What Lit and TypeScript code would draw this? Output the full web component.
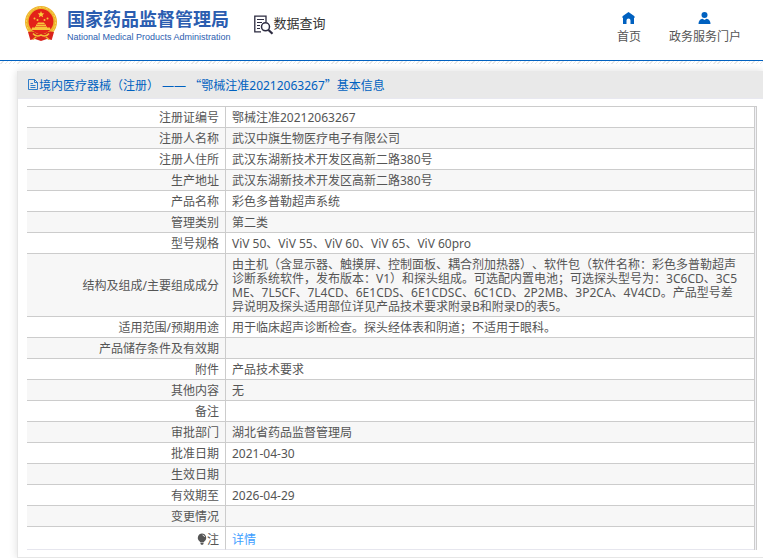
import { LitElement, html, css, svg, nothing } from "lit";
import { customElement, property } from "lit/decorators.js";

interface Row {
  label: string;
  value?: string;
  note?: boolean;
}

const rows: Row[] = [
  { label: "注册证编号", value: "鄂械注准20212063267" },
  { label: "注册人名称", value: "武汉中旗生物医疗电子有限公司" },
  { label: "注册人住所", value: "武汉东湖新技术开发区高新二路380号" },
  { label: "生产地址", value: "武汉东湖新技术开发区高新二路380号" },
  { label: "产品名称", value: "彩色多普勒超声系统" },
  { label: "管理类别", value: "第二类" },
  { label: "型号规格", value: "ViV 50、ViV 55、ViV 60、ViV 65、ViV 60pro" },
  {
    label: "结构及组成/主要组成成分",
    value:
      "由主机（含显示器、触摸屏、控制面板、耦合剂加热器）、软件包（软件名称：彩色多普勒超声诊断系统软件，发布版本：V1）和探头组成。可选配内置电池；可选探头型号为：3C6CD、3C5ME、7L5CF、7L4CD、6E1CDS、6E1CDSC、6C1CD、2P2MB、3P2CA、4V4CD。产品型号差异说明及探头适用部位详见产品技术要求附录B和附录D的表5。",
  },
  { label: "适用范围/预期用途", value: "用于临床超声诊断检查。探头经体表和阴道；不适用于眼科。" },
  { label: "产品储存条件及有效期" },
  { label: "附件", value: "产品技术要求" },
  { label: "其他内容", value: "无" },
  { label: "备注" },
  { label: "审批部门", value: "湖北省药品监督管理局" },
  { label: "批准日期", value: "2021-04-30" },
  { label: "生效日期" },
  { label: "有效期至", value: "2026-04-29" },
  { label: "变更情况" },
  { label: "注", note: true },
];

const emblem = svg`
  <path d="M7 24 L5 34 L10 33 L16 35 L22 33 L27 34 L25 24 Z" fill="#d9231c"/>
  <circle cx="16" cy="16" r="16" fill="#eeb52d"/>
  <circle cx="16" cy="16" r="14.6" fill="none" stroke="#f9d65c" stroke-width="1" stroke-dasharray="2 1.5"/>
  <circle cx="16" cy="15.5" r="12.4" fill="#e32219"/>
  <path d="M16 5l.9 2.2 2.4.2-1.8 1.5.6 2.3-2.1-1.3-2.1 1.3.6-2.3-1.8-1.5 2.4-.2z" fill="#fbd23c"/>
  <g fill="#f8c63a">
    <circle cx="9.5" cy="12.5" r="1"/><circle cx="12.5" cy="14" r="1"/>
    <circle cx="19.5" cy="14" r="1"/><circle cx="22.5" cy="12.5" r="1"/>
    <path d="M12 18 L13 16.5 H19 L20 18 Z M11 18.6 H21 V20 H11 Z M7 21.5 H10 V20.5 H22 V21.5 H25 L25.5 24 H6.500 Z"/>
  </g>
  <path d="M3 26 Q9 24.500 12 28 L16 26.500 L20 28 Q23 24.500 29 26 L27 33 L21 31 L16 34 L11 31 L5 33 Z" fill="#d9231c"/>
  <path d="M8 27.500 Q11 31.500 16 29 Q21 31.500 24 27.500" fill="none" stroke="#f5bf35" stroke-width="1.500"/>
  <path d="M8 33.500 L11 31 M24 33.500 L21 31" stroke="#eeb52d" stroke-width="1.300"/>`;

@customElement("site-header")
export class SiteHeader extends LitElement {
  static styles = css`
    :host {
      display: block;
      background: #fff;
      border-bottom: 1px solid #0061c0;
    }
    .bar {
      display: flex;
      align-items: flex-start;
      height: 60px;
      box-sizing: border-box;
      padding: 6px 22px 0 25px;
    }
    a {
      color: inherit;
      text-decoration: none;
    }
    .brand {
      display: flex;
      gap: 10px;
      color: #2b5db0;
      white-space: nowrap;
    }
    .emblem {
      width: 32px;
      height: 35px;
    }
    .names {
      display: flex;
      flex-direction: column;
    }
    .zh {
      font-size: 18px;
      font-weight: 700;
      line-height: 26px;
    }
    .en {
      font: 400 9px/10px "Liberation Sans", sans-serif;
    }
    .query {
      display: flex;
      align-items: center;
      margin: 5px 0 0 22px;
      font-size: 13px;
      line-height: 20px;
      color: #333;
      white-space: nowrap;
    }
    .query svg {
      width: 21px;
      height: 20px;
      margin-top: 4px;
    }
    nav {
      display: flex;
      gap: 28px;
      margin: 6px 0 0 auto;
      font-size: 12px;
      line-height: 18px;
      color: #555;
      white-space: nowrap;
    }
    nav a {
      display: flex;
      flex-direction: column;
      align-items: center;
      gap: 4px;
    }
    nav svg {
      width: 13px;
      height: 12px;
      fill: #0061c0;
    }
  `;

  render() {
    return html`
      <header class="bar">
        <a class="brand" href="#home">
          <svg class="emblem" viewBox="0 0 32 35" aria-hidden="true">${emblem}</svg>
          <span class="names">
            <span class="zh">国家药品监督管理局</span>
            <span class="en">National Medical Products Administration</span>
          </span>
        </a>
        <a class="query" href="#query">
          <svg viewBox="0 0 21 20" aria-hidden="true" fill="none" stroke="#2c2b40">
            <path d="M8 16.800H1.800V1.200H13V7" stroke-width="1.300" />
            <path d="M4 4.500H11M4 7.500H9M4 10.500H7M4 13.500H7" />
            <circle cx="12.500" cy="11.800" r="4" stroke-width="1.500" />
            <path d="M15.500 15l4 3.800" stroke-width="2.200" />
          </svg>
          <span>数据查询</span>
        </a>
        <nav>
          <a href="#home">
            <svg viewBox="0 0 13 12" aria-hidden="true">
              <path d="M6.500 0L12.500 4.200V6H12V12H8.500V8.500a2 2 0 0 0-4 0V12H1V6H.5V4.200Z" />
            </svg>
            <span>首页</span>
          </a>
          <a href="#services">
            <svg viewBox="0 0 13 12" aria-hidden="true">
              <circle cx="6.500" cy="3" r="3" />
              <path d="M.5 12Q.5 7.500 4.500 6.800L6.500 8L8.500 6.800Q12.500 7.500 12.500 12Z" />
            </svg>
            <span>政务服务门户</span>
          </a>
        </nav>
      </header>
    `;
  }
}

@customElement("record-table")
export class RecordTable extends LitElement {
  @property({ attribute: false }) rows: Row[] = [];

  static styles = css`
    :host {
      display: block;
      border-top: 1px solid #ccc;
      border-right: 1px solid #ccc;
      padding-right: 1px;
      background: #f1f1f6;
    }
    table {
      width: 100%;
      border-collapse: separate;
      border-spacing: 0;
      table-layout: fixed;
      font-size: 12px;
      line-height: 14px;
      color: #555;
      border-right: 1px solid #ccc;
      background: #fff;
    }
    .label-col {
      width: 199px;
    }
    th,
    td {
      height: 18px;
      padding: 2px 6px 0;
      border-bottom: 1px solid #ccc;
      font-weight: 400;
      word-break: break-all;
    }
    th {
      text-align: right;
      border-right: 1px solid #ccc;
    }
    td {
      padding-right: 14px;
    }
    .long th,
    .long td {
      height: 60px;
    }
    tr:nth-child(even) {
      background: #f7f7f7;
    }
    tr:last-child th,
    tr:last-child td {
      height: 18px;
      padding-top: 4px;
      border-bottom-color: #e6e6ee;
    }
    .bulb {
      width: 10px;
      height: 12px;
      vertical-align: -1px;
      fill: #555;
    }
    a {
      color: #409eff;
      text-decoration: none;
    }
  `;

  render() {
    return html`
      <table>
        <colgroup>
          <col class="label-col" />
          <col />
        </colgroup>
        <tbody>
          ${this.rows.map(
            (r) => html`<tr class=${(r.value ?? "").length > 80 ? "long" : "short"}>
              <th scope="row">${r.note
                ? html`<svg class="bulb" viewBox="0 0 10 12" aria-hidden="true">
                    <path d="M5 .5a4.300 4.300 0 0 1 2.500 7.700L6.500 9.500h-3L2.500 8.200A4.300 4.300 0 0 1 5 .5ZM3.500 10h3v1l-.8.800H4.300l-.8-.8Z" />
                    <path d="M5.500 2Q7.300 2.300 7.600 4" fill="none" stroke="#fff" stroke-width=".8" />
                  </svg>`
                : nothing}${r.label}</th>
              <td>${r.note ? html`<a href="#detail">详情</a>` : r.value}</td>
            </tr>`
          )}
        </tbody>
      </table>
    `;
  }
}

@customElement("app-root")
export class AppRoot extends LitElement {
  static styles = css`
    :host {
      display: block;
      min-height: 100vh;
      background: #fff;
      font-family: "Noto Sans", "Noto Sans CJK SC", sans-serif;
      text-spacing-trim: space-all;
    }
    .hatch {
      height: 3px;
      background: repeating-linear-gradient(135deg, #fff 0 2px, #e8e8e8 2px 3px);
    }
    main {
      margin: 7px 0 0 17px;
      border: 1px solid #e6e6e6;
      border-width: 0 0 1px 1px;
      box-shadow: 0 0 8px #ddd;
      background: #fff;
    }
    .title {
      display: flex;
      align-items: center;
      height: 27px;
      margin: 0;
      padding-left: 10px;
      background: #e9e9e9;
      border-bottom: 1px solid #e8e8f0;
      font-size: 12px;
      font-weight: 400;
      color: #0061c0;
      white-space: pre;
    }
    .title svg {
      width: 10px;
      height: 11px;
      margin-right: 1px;
    }
    .cjk {
      font-family: "Noto Sans CJK SC", sans-serif;
    }
    record-table {
      margin: 7px 6px 7px 9px;
    }
  `;

  render() {
    return html`
      <site-header></site-header>
      <div class="hatch"></div>
      <main>
        <h1 class="title"><svg viewBox="0 0 10 11" fill="none" stroke="#0061c0" stroke-width=".8" aria-hidden="true"><path d="M.5.5H6.500L9.500 3.500V10.500H.5ZM6.500.5V3.500H9.500M2.500 4.500H5M2.500 6.500H7.500M2.500 8.500H7.500" /></svg><span>境内医疗器械（注册） —— <span class="cjk">“</span>鄂械注准20212063267<span class="cjk">”</span>基本信息</span></h1>
        <record-table .rows=${rows}></record-table>
      </main>
    `;
  }
}
